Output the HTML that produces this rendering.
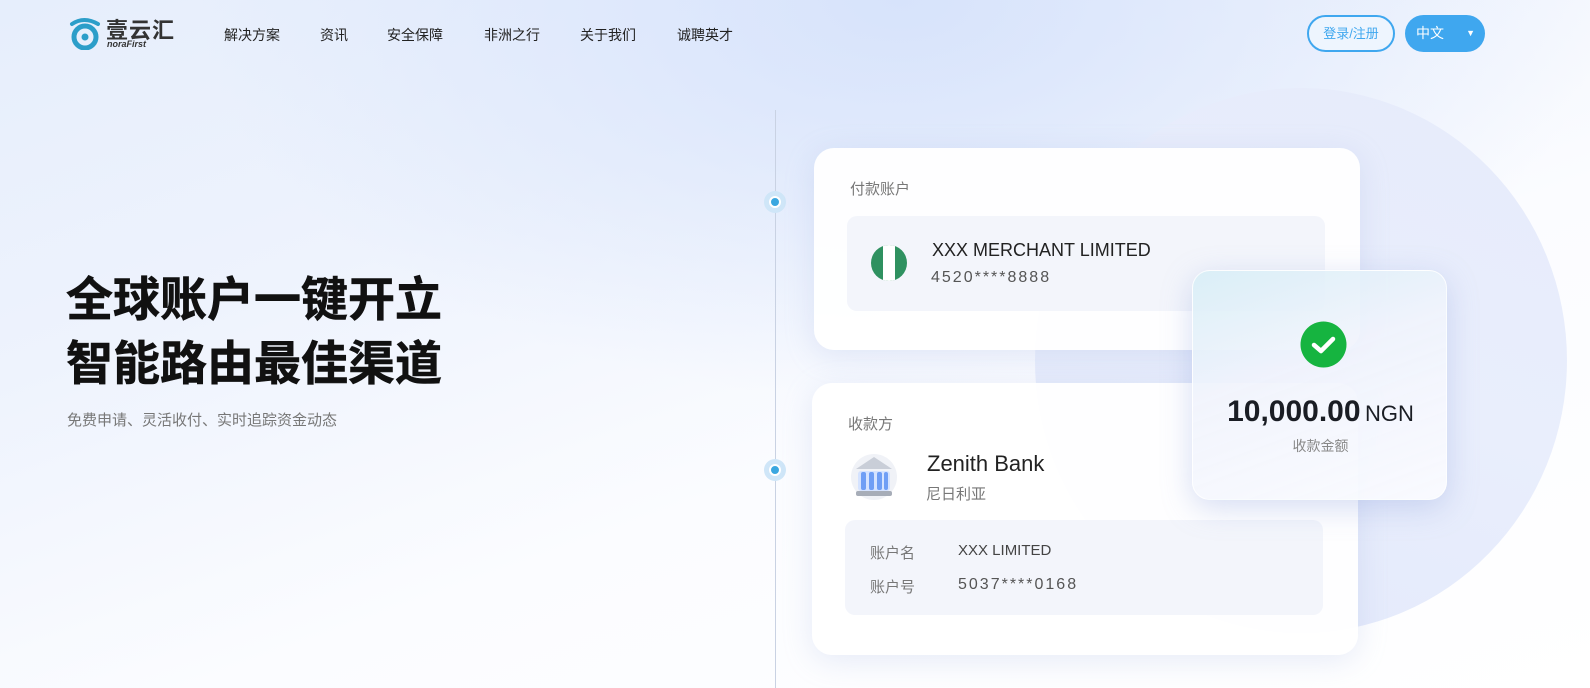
<!DOCTYPE html>
<html><head><meta charset="utf-8"><style>
*{margin:0;padding:0;box-sizing:border-box}
body{width:1590px;height:688px;overflow:hidden;position:relative;font-family:"Liberation Sans","Noto Sans CJK SC",sans-serif;
background:linear-gradient(160deg,#e6eefc 0%,#eef3fd 30%,#fbfcff 60%,#ffffff 100%);}
.bg2{position:absolute;inset:0;background:radial-gradient(ellipse 700px 400px at 900px 0px,#d7e3fb 0%,rgba(215,227,251,0) 100%)}
.circle{position:absolute;left:1035px;top:88px;width:532px;height:545px;border-radius:50%;background:linear-gradient(200deg,#e6ebfb 0%,#e9eefc 50%,#e3e9fb 100%)}
.nav a{position:absolute;top:25px;font-size:14px;color:#222}
.card{position:absolute;background:rgba(255,255,255,0.94);border-radius:20px;box-shadow:0 6px 30px rgba(150,170,220,0.22)}
.inner{position:absolute;background:#f3f5fb;border-radius:10px}
.lbl{position:absolute;font-size:15px;color:#777}
</style></head><body>
<div class="bg2"></div>
<div class="circle"></div>
<svg style="position:absolute;left:68px;top:16px" width="36" height="34" viewBox="0 0 36 34">
<path d="M4 8 Q16 0 30 8" stroke="#2c9ec9" stroke-width="4" fill="none" stroke-linecap="round"/>
<circle cx="17" cy="21" r="11" stroke="#2c9ec9" stroke-width="5" fill="none"/>
<circle cx="17" cy="21" r="3.5" fill="#2c9ec9"/>
</svg>
<div style="position:absolute;left:106px;top:13px;font-size:22px;color:#333;letter-spacing:1px;font-weight:bold">壹云汇</div>
<div style="position:absolute;left:107px;top:39px;font-size:9px;color:#333;font-style:italic;font-weight:bold">noraFirst</div>
<div class="nav">
<a style="left:224px">解决方案</a><a style="left:320px">资讯</a><a style="left:387px">安全保障</a><a style="left:484px">非洲之行</a><a style="left:580px">关于我们</a><a style="left:677px">诚聘英才</a>
</div>
<div style="position:absolute;left:1307px;top:15px;width:88px;height:37px;border:2px solid #3fa7ef;border-radius:19px;color:#3fa7ef;font-size:13px;text-align:center;line-height:33px;background:#eef5fe">登录/注册</div>
<div style="position:absolute;left:1405px;top:15px;width:80px;height:37px;border-radius:19px;background:#3fa7ef;color:#fff;font-size:14px;line-height:37px;padding-left:11px">中文<span style="position:absolute;right:10px;font-size:9px">▼</span></div>

<div style="position:absolute;left:66px;top:268px;font-size:47px;font-weight:bold;color:#111;line-height:64px;letter-spacing:0px;-webkit-text-stroke:0.6px #111">全球账户一键开立<br>智能路由最佳渠道</div>
<div style="position:absolute;left:67px;top:409px;font-size:15px;color:#777">免费申请、灵活收付、实时追踪资金动态</div>

<div style="position:absolute;left:775px;top:110px;width:1px;height:578px;background:#c9d2e3"></div>
<div style="position:absolute;left:764px;top:191px;width:22px;height:22px;border-radius:50%;background:#cfe6f8"></div>
<div style="position:absolute;left:769px;top:196px;width:12px;height:12px;border-radius:50%;background:#3aa7e0;border:2px solid #fff"></div>
<div style="position:absolute;left:764px;top:459px;width:22px;height:22px;border-radius:50%;background:#cfe6f8"></div>
<div style="position:absolute;left:769px;top:464px;width:12px;height:12px;border-radius:50%;background:#3aa7e0;border:2px solid #fff"></div>

<div class="card" style="left:814px;top:148px;width:546px;height:202px">
<div class="lbl" style="left:36px;top:30px">付款账户</div>
<div class="inner" style="left:33px;top:68px;width:478px;height:95px">
<svg style="position:absolute;left:24px;top:29px" width="36" height="36"><defs><clipPath id="c"><circle cx="18" cy="18" r="18"/></clipPath></defs><g clip-path="url(#c)"><rect width="36" height="36" fill="#2f9160"/><rect x="12" width="12" height="36" fill="#fff"/></g></svg>
<div style="position:absolute;left:85px;top:24px;font-size:18px;color:#222">XXX MERCHANT LIMITED</div>
<div style="position:absolute;left:84px;top:53px;font-size:16px;color:#555;letter-spacing:2px">4520****8888</div>
</div></div>

<div class="card" style="left:812px;top:383px;width:546px;height:272px">
<div class="lbl" style="left:36px;top:30px">收款方</div>
<svg style="position:absolute;left:38px;top:68px" width="48" height="50" viewBox="0 0 48 50">
<circle cx="24" cy="26" r="23" fill="#f0f2f7"/>
<path d="M6 18 L24 6 L42 18 Z" fill="#c9ced8"/>
<rect x="8" y="20" width="32" height="20" rx="3" fill="#d5e3ff"/>
<rect x="11" y="21" width="5" height="18" rx="2" fill="#6f9ef5"/><rect x="19" y="21" width="5" height="18" rx="2" fill="#6f9ef5"/><rect x="27" y="21" width="5" height="18" rx="2" fill="#6f9ef5"/><rect x="34" y="21" width="4" height="18" rx="2" fill="#6f9ef5"/>
<rect x="6" y="40" width="36" height="5" rx="2" fill="#a7adb8"/>
</svg>
<div style="position:absolute;left:115px;top:68px;font-size:22px;color:#222">Zenith Bank</div>
<div style="position:absolute;left:114px;top:100px;font-size:15px;color:#777">尼日利亚</div>
<div class="inner" style="left:33px;top:137px;width:478px;height:95px">
<div style="position:absolute;left:25px;top:22px;font-size:15px;color:#777">账户名</div>
<div style="position:absolute;left:113px;top:22px;font-size:15px;color:#444">XXX LIMITED</div>
<div style="position:absolute;left:25px;top:56px;font-size:15px;color:#777">账户号</div>
<div style="position:absolute;left:113px;top:56px;font-size:16px;color:#555;letter-spacing:2px">5037****0168</div>
</div></div>

<div style="position:absolute;left:1192px;top:270px;width:255px;height:230px;border-radius:18px;background:linear-gradient(160deg,rgba(215,238,246,0.9),rgba(240,243,252,0.9) 40%,rgba(250,251,255,0.95));box-shadow:0 8px 30px rgba(140,160,220,0.35);border:1px solid rgba(255,255,255,0.8)">
<svg style="position:absolute;left:107px;top:50px" width="47" height="47"><circle cx="23.5" cy="23.5" r="23" fill="#16b440"/><path d="M14 24 L21 30 L33 18" stroke="#fff" stroke-width="4.5" fill="none" stroke-linecap="round" stroke-linejoin="round"/></svg>
<div style="position:absolute;left:0;width:255px;top:124px;text-align:center;color:#1a1d24"><span style="font-size:30px;font-weight:bold">10,000.00</span> <span style="font-size:22px">NGN</span></div>
<div style="position:absolute;left:0;width:255px;top:165px;text-align:center;font-size:14px;color:#888">收款金额</div>
</div>
</body></html>
